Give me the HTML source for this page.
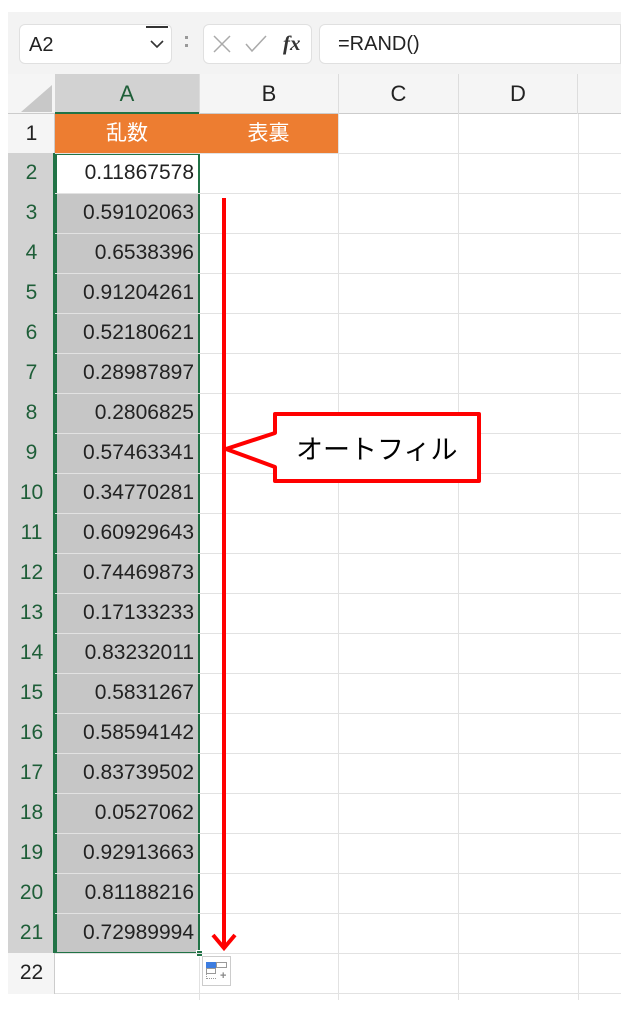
<!DOCTYPE html><html><head><style>
body{margin:0;width:621px;height:1017px;background:#fff;position:relative;overflow:hidden;font-family:"Liberation Sans","Noto Sans CJK JP",sans-serif}
.a{position:absolute;box-sizing:border-box}
.num{font-size:21px;color:#222;text-align:right;padding-right:5px;line-height:40px}
.rh{font-size:21px;text-align:center;line-height:40px;color:#222}
</style></head><body>
<div class="a" style="left:8px;top:12px;width:613px;height:62px;background:#f3f3f3"></div>
<div class="a" style="left:19px;top:24px;width:153px;height:40px;background:#fff;border:1px solid #e0e0e0;border-radius:6px;font-size:20px;line-height:40px;padding-left:9px;color:#222">A2</div>
<div class="a" style="left:146px;top:26px;width:22px;height:2px;background:#333"></div>
<svg class="a" style="left:148px;top:38px" width="18" height="12"><path d="M3 3 L9 9 L15 3" stroke="#333" stroke-width="1.6" fill="none"/></svg>
<div class="a" style="left:185px;top:36px;width:3px;height:3px;background:#999"></div>
<div class="a" style="left:185px;top:44px;width:3px;height:3px;background:#999"></div>
<div class="a" style="left:203px;top:24px;width:109px;height:40px;background:#fff;border:1px solid #e0e0e0;border-radius:6px"></div>
<svg class="a" style="left:210px;top:32px" width="100" height="24"><path d="M4 4 L20 20 M20 4 L4 20" stroke="#aaa" stroke-width="1.5"/><path d="M36 12 L42 19 L56 4" stroke="#aaa" stroke-width="1.5" fill="none"/><text x="73" y="18" font-family="Liberation Serif" font-style="italic" font-weight="bold" font-size="21" fill="#333">fx</text></svg>
<div class="a" style="left:319px;top:24px;width:302px;height:40px;background:#fff;border:1px solid #e0e0e0;border-radius:6px 0 0 6px;font-size:20px;line-height:38px;padding-left:18px;color:#222">=RAND()</div>
<!-- header row -->
<div class="a" style="left:8px;top:74px;width:613px;height:40px;background:#f5f5f5;border-bottom:1px solid #ccc"></div>
<svg class="a" style="left:18px;top:83px" width="36" height="30"><path d="M34 2 L34 29 L3 29 Z" fill="#c8c8c8"/></svg>
<div class="a" style="left:55px;top:74px;width:144px;height:40px;background:#d2d2d2;border-bottom:2px solid #217346;text-align:center;font-size:22px;line-height:40px;color:#1e5e38">A</div>
<div class="a rh" style="left:199px;top:74px;width:139px;border-left:1px solid #ddd;font-size:22px">B</div>
<div class="a rh" style="left:338px;top:74px;width:120px;border-left:1px solid #ddd;font-size:22px">C</div>
<div class="a rh" style="left:458px;top:74px;width:120px;border-left:1px solid #ddd;border-right:1px solid #ddd;font-size:22px">D</div>
<!-- row headers column bg -->
<div class="a" style="left:8px;top:114px;width:47px;height:880px;background:#f5f5f5;border-right:1px solid #ccc"></div>
<div class="a" style="left:8px;top:153px;width:47px;height:800px;background:#d2d2d2;border-right:2px solid #217346"></div>
<!-- grid lines -->
<svg class="a" style="left:0;top:0" width="621" height="1017">
<g stroke="#e2e2e2" stroke-width="1">
<line x1="199.5" y1="114" x2="199.5" y2="1000"/><line x1="338.5" y1="114" x2="338.5" y2="1000"/><line x1="458.5" y1="114" x2="458.5" y2="1000"/><line x1="578.5" y1="114" x2="578.5" y2="1000"/>
<g id="h"></g>
</g>
</svg>
<div id="rows"></div>
<div class="a" style="left:55px;top:114px;width:283px;height:40px;background:#ed7d31"></div>
<div class="a" style="left:55px;top:114px;width:144px;text-align:center;font-size:21px;line-height:40px;color:#fff">乱数</div>
<div class="a" style="left:199px;top:114px;width:139px;text-align:center;font-size:21px;line-height:40px;color:#fff">表裏</div>
<div class="a rh" style="left:8px;top:114px;width:47px">1</div>
<div class="a" style="left:55px;top:193px;width:144px;height:760px;background:#c6c6c6"></div>
<div class="a" style="left:55px;top:153px;width:145px;height:801px;border:2px solid #217346"></div>
<div class="a" style="left:196px;top:950px;width:7px;height:7px;background:#217346;border:1px solid #fff"></div>
<div id="cells"></div>
<script>
var v=["0.11867578","0.59102063","0.6538396","0.91204261","0.52180621","0.28987897","0.2806825","0.57463341","0.34770281","0.60929643","0.74469873","0.17133233","0.83232011","0.5831267","0.58594142","0.83739502","0.0527062","0.92913663","0.81188216","0.72989994"];
var h="";
for(var i=0;i<21;i++){var y=153+i*40;var r=i+2;
h+='<div class="a" style="left:55px;top:'+(y+40)+'px;width:566px;height:1px;background:#e2e2e2"></div>';
h+='<div class="a rh" style="left:8px;top:'+y+'px;width:47px;color:'+(r<22?'#1e5e38':'#222')+'">'+r+'</div>';
if(i<20)h+='<div class="a num" style="left:55px;top:'+y+'px;width:144px">'+v[i]+'</div>';}
h+='<div class="a" style="left:55px;top:153px;width:566px;height:1px;background:#e2e2e2"></div>';
document.getElementById("cells").innerHTML=h;
</script>
<!-- arrow & callout -->
<svg class="a" style="left:0;top:0" width="621" height="1017">
<line x1="224" y1="198" x2="224" y2="945" stroke="#f00" stroke-width="4"/>
<path d="M213 935 L224 948 L235 935" stroke="#f00" stroke-width="4" fill="none"/>
<path d="M275 414 H479 V481 H275 V467 L226 449 L275 433 Z" fill="#fff" stroke="#f00" stroke-width="4" stroke-linejoin="round"/>
<text x="296" y="459" font-family="Liberation Sans,Noto Sans CJK JP,sans-serif" font-size="27" fill="#000">オートフィル</text>
</svg>
<!-- autofill options icon -->
<div class="a" style="left:202px;top:956px;width:29px;height:30px;background:#fff;border:1px solid #ccc"></div>
<div class="a" style="left:206px;top:962px;width:10px;height:6px;background:#3d7de0"></div>
<div class="a" style="left:216px;top:962px;width:11px;height:6px;border:1px solid #999"></div>
<div class="a" style="left:206px;top:968px;width:10px;height:6px;border:1px solid #999"></div>
<div class="a" style="left:206px;top:974px;width:10px;height:5px;border-left:1px dotted #999;border-bottom:1px dotted #999"></div>
<div class="a" style="left:220px;top:971px;font-size:11px;font-weight:bold;color:#888;line-height:10px">+</div>
</body></html>
